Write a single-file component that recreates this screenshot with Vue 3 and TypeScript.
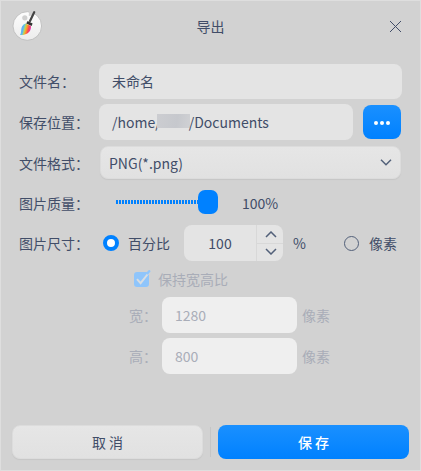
<script setup lang="ts">
import { ref } from 'vue'

const fileName = ref('未命名')
const format = ref('PNG(*.png)')
const quality = ref(100)
const percent = ref(100)
const sizes = [
  { label: '宽：', value: 1280 },
  { label: '高：', value: 800 },
]
</script>

<template>
  <main class="dialog">
    <header class="titlebar">
      <svg class="logo" viewBox="0 0 32 32" width="32" height="32">
        <defs>
          <linearGradient id="palette" x1="0" y1="0" x2="0" y2="1">
            <stop offset="0" stop-color="#fdfdfd" />
            <stop offset="1" stop-color="#ececec" />
          </linearGradient>
          <linearGradient id="bristle" x1="0" y1="0.35" x2="1" y2="0.65">
            <stop offset="0" stop-color="#4fb4f5" />
            <stop offset="0.3" stop-color="#5cc5e8" />
            <stop offset="0.44" stop-color="#b8d65a" />
            <stop offset="0.57" stop-color="#ff9a28" />
            <stop offset="0.75" stop-color="#fb4350" />
            <stop offset="1" stop-color="#d433e0" />
          </linearGradient>
        </defs>
        <circle cx="16.3" cy="16" r="14.3" fill="url(#palette)" stroke="#b9b9b9" stroke-width=".8" />
        <circle cx="13.8" cy="7.8" r="2.6" fill="#d0d0d0" />
        <path d="M18 1 24 0 21.5 5.5 17.8 6z" fill="#d2d2d2" />
        <path d="M23.2 2.2 19 11" stroke="#444" stroke-width="2.2" stroke-linecap="round" />
        <path d="m16.6 11 5 2.4-1 2.6-5.4-2.6z" fill="#333" />
        <path d="M14.6 13.4 19.9 15.9C20.6 20.6 17 25.2 9 25 11.4 22 8.2 15.8 14.6 13.4z" fill="url(#bristle)" />
        <path d="M12.4 15.8C11 18.5 12.2 22 10.6 24.4" stroke="#6ca4f0" stroke-width=".9" fill="none" />
      </svg>
      <h1>导出</h1>
      <svg class="close" viewBox="0 0 11 11" width="11" height="11">
        <path d="M0 0 11 11M11 0 0 11" stroke="#414d68" stroke-width="1" />
      </svg>
    </header>

    <section class="row name-row">
      <label>文件名：</label>
      <div class="field">{{ fileName }}</div>
    </section>

    <section class="row path-row">
      <label>保存位置：</label>
      <div class="field path">/home/<span class="masked"></span>/Documents</div>
      <button class="browse" aria-label="browse">
        <svg viewBox="0 0 16 4" width="16" height="4" fill="#fff">
          <circle cx="2" cy="2" r="2" /><circle cx="8" cy="2" r="2" /><circle cx="14" cy="2" r="2" />
        </svg>
      </button>
    </section>

    <section class="row format-row">
      <label>文件格式：</label>
      <div class="select">
        <span>{{ format }}</span>
        <svg viewBox="0 0 12 7" width="12" height="7"><path d="M1 .8 6 5.8 11 .8" /></svg>
      </div>
    </section>

    <section class="row quality-row">
      <label>图片质量：</label>
      <div class="slider"><i class="track"></i><i class="handle"></i></div>
      <span>{{ quality }}%</span>
    </section>

    <section class="row size-row">
      <label>图片尺寸：</label>
      <i class="radio on"></i>
      <span class="percent-label">百分比</span>
      <div class="spin">
        <span class="number">{{ percent }}</span>
        <div class="steps">
          <span><svg viewBox="0 0 12 7" width="12" height="7"><path d="M1 6 6 1 11 6" /></svg></span>
          <span><svg viewBox="0 0 12 7" width="12" height="7"><path d="M1 1 6 6 11 1" /></svg></span>
        </div>
      </div>
      <span class="unit">%</span>
      <i class="radio"></i>
      <span class="pixel-label">像素</span>
    </section>

    <section class="row ratio-row">
      <svg viewBox="0 0 17 17" width="17" height="17">
        <rect x="0" y="2" width="15" height="15" rx="3" fill="#8fc5fb" />
        <path d="m3 9.2 3.6 4L15.4 2" fill="none" stroke="#d8dde2" stroke-width="2" />
        <path d="M13.6 3.3 15.2 1.3" stroke="#8fc5fb" stroke-width="2.4" stroke-linecap="round" />
      </svg>
      <span>保持宽高比</span>
    </section>

    <section v-for="s in sizes" :key="s.label" class="row dim-row">
      <label>{{ s.label }}</label>
      <div class="field">{{ s.value }}</div>
      <span>像素</span>
    </section>

    <footer>
      <button class="cancel">取 消</button>
      <i class="divider"></i>
      <button class="save">保 存</button>
    </footer>
  </main>
</template>

<style>
body {
  margin: 0;
  background: #d2d2d2;
}
</style>

<style scoped>
* {
  box-sizing: border-box;
}
.dialog {
  width: 421px;
  height: 471px;
  border: 1px solid #dedede;
  background: #d2d2d2;
  color: #414d68;
  font: 14px/20px "Noto Sans CJK SC", sans-serif;
  display: flex;
  flex-direction: column;
  white-space: nowrap;
}
.titlebar {
  height: 50px;
  margin-bottom: 13px;
  padding: 0 19px 0 10px;
  display: grid;
  grid-template-columns: 32px 1fr 11px;
  align-items: center;
}
.close {
  margin-top: 1px;
}
h1 {
  margin: 0 12px 0 0;
  padding-bottom: 1px;
  text-align: center;
  font-size: 14px;
  font-weight: 400;
}
.row {
  display: flex;
  align-items: center;
  flex: none;
  padding-left: 18px;
}
label {
  width: 80px;
  flex: none;
}
.field {
  height: 36px;
  border-radius: 8px;
  background: #e4e4e4;
  padding-left: 13px;
  display: flex;
  align-items: center;
  flex: none;
}
.name-row {
  height: 35px;
  margin-bottom: 5px;
}
.name-row .field {
  width: 303px;
  height: 35px;
}
.name-row label,
.name-row .field {
  padding-bottom: 1px;
}
.path-row {
  height: 36px;
  margin-bottom: 6px;
}
.path {
  width: 254px;
}
.masked {
  width: 33px;
  height: 14px;
  margin: -2px -1px 0 -4px;
  background: linear-gradient(100deg, #cccdd1, #c6c8cd 60%, #d0d1d4);
}
button {
  border: 0;
  padding: 0;
  font: inherit;
  border-radius: 8px;
}
.browse {
  width: 38px;
  height: 34px;
  margin-left: 10px;
  display: flex;
  align-items: center;
  justify-content: center;
  padding-top: 2px;
  background: linear-gradient(#1a90ff, #0081ff);
}
.format-row {
  height: 33px;
  margin-bottom: 8px;
}
.select {
  width: 301px;
  height: 33px;
  margin-left: 1px;
  padding: 0 8px 0 9px;
  border: 1px solid #dcdcdc;
  border-radius: 8px;
  background: linear-gradient(#e6e6e6, #e1e1e1);
  box-shadow: 0 1px 1px #c6c6c6;
  display: flex;
  align-items: center;
  justify-content: space-between;
}
.select span {
  margin-left: -1px;
}
.select svg path,
.steps svg path {
  fill: none;
  stroke: #526079;
  stroke-width: 1.5;
}
.quality-row {
  height: 32px;
  margin-bottom: 6px;
}
.slider {
  width: 102px;
  margin: -2px 24px 0 17px;
  display: flex;
  align-items: center;
}
.track {
  flex: 1;
  height: 4px;
  background: repeating-linear-gradient(90deg, #0081ff 0 2px, transparent 2px 3px);
}
.handle {
  width: 20px;
  height: 24px;
  border-radius: 7px;
  background: #0081ff;
}
.size-row {
  height: 36px;
}
.radio {
  width: 15px;
  height: 15px;
  flex: none;
  border: 1px solid #526079;
  border-radius: 50%;
}
.radio.on {
  width: 16px;
  height: 16px;
  margin-left: 4px;
  border: 4px solid #0081ff;
  background: #fff;
}
.percent-label {
  width: 42px;
  margin: 0 14px 0 9px;
}
.spin {
  width: 99px;
  height: 36px;
  flex: none;
  border-radius: 8px;
  background: #e4e4e4;
  display: flex;
}
.number {
  width: 72px;
  line-height: 36px;
  text-align: center;
}
.steps {
  width: 27px;
  border-left: 1px solid #d8d8d8;
  display: grid;
  grid-template-rows: 19px 17px;
}
.steps span {
  display: flex;
  justify-content: center;
  align-items: center;
  padding-left: 2px;
}
.steps span:first-child {
  border-bottom: 1px solid #d8d8d8;
}
.steps span:last-child {
  padding-bottom: 3px;
}
.unit {
  width: 51px;
  margin-left: 10px;
}
.pixel-label {
  margin-left: 10px;
}
.ratio-row {
  height: 36px;
  padding-left: 133px;
  color: #a9adb8;
}
.ratio-row svg {
  margin: -1px 7px 0 0;
}
.dim-row {
  height: 36px;
  margin-bottom: 5px;
  padding-left: 128px;
  color: #a9adb8;
}
.dim-row label {
  width: 33px;
}
.dim-row .field {
  width: 135px;
  background: #efefef;
}
.dim-row > span {
  margin-left: 5px;
}
footer {
  display: flex;
  align-items: center;
  margin: auto 11px 11px;
}
footer button {
  width: 191px;
  height: 34px;
}
.cancel {
  color: #414d68;
  border: 1px solid #dcdcdc;
  background: linear-gradient(#e6e6e6, #e1e1e1);
  box-shadow: 0 1px 1px #c6c6c6;
}
.divider {
  width: 1px;
  height: 30px;
  margin: 0 7px;
  background: #c5c5c5;
}
.save {
  color: #fff;
  font-weight: 500;
  background: linear-gradient(#1a90ff, #0081ff);
}
</style>
